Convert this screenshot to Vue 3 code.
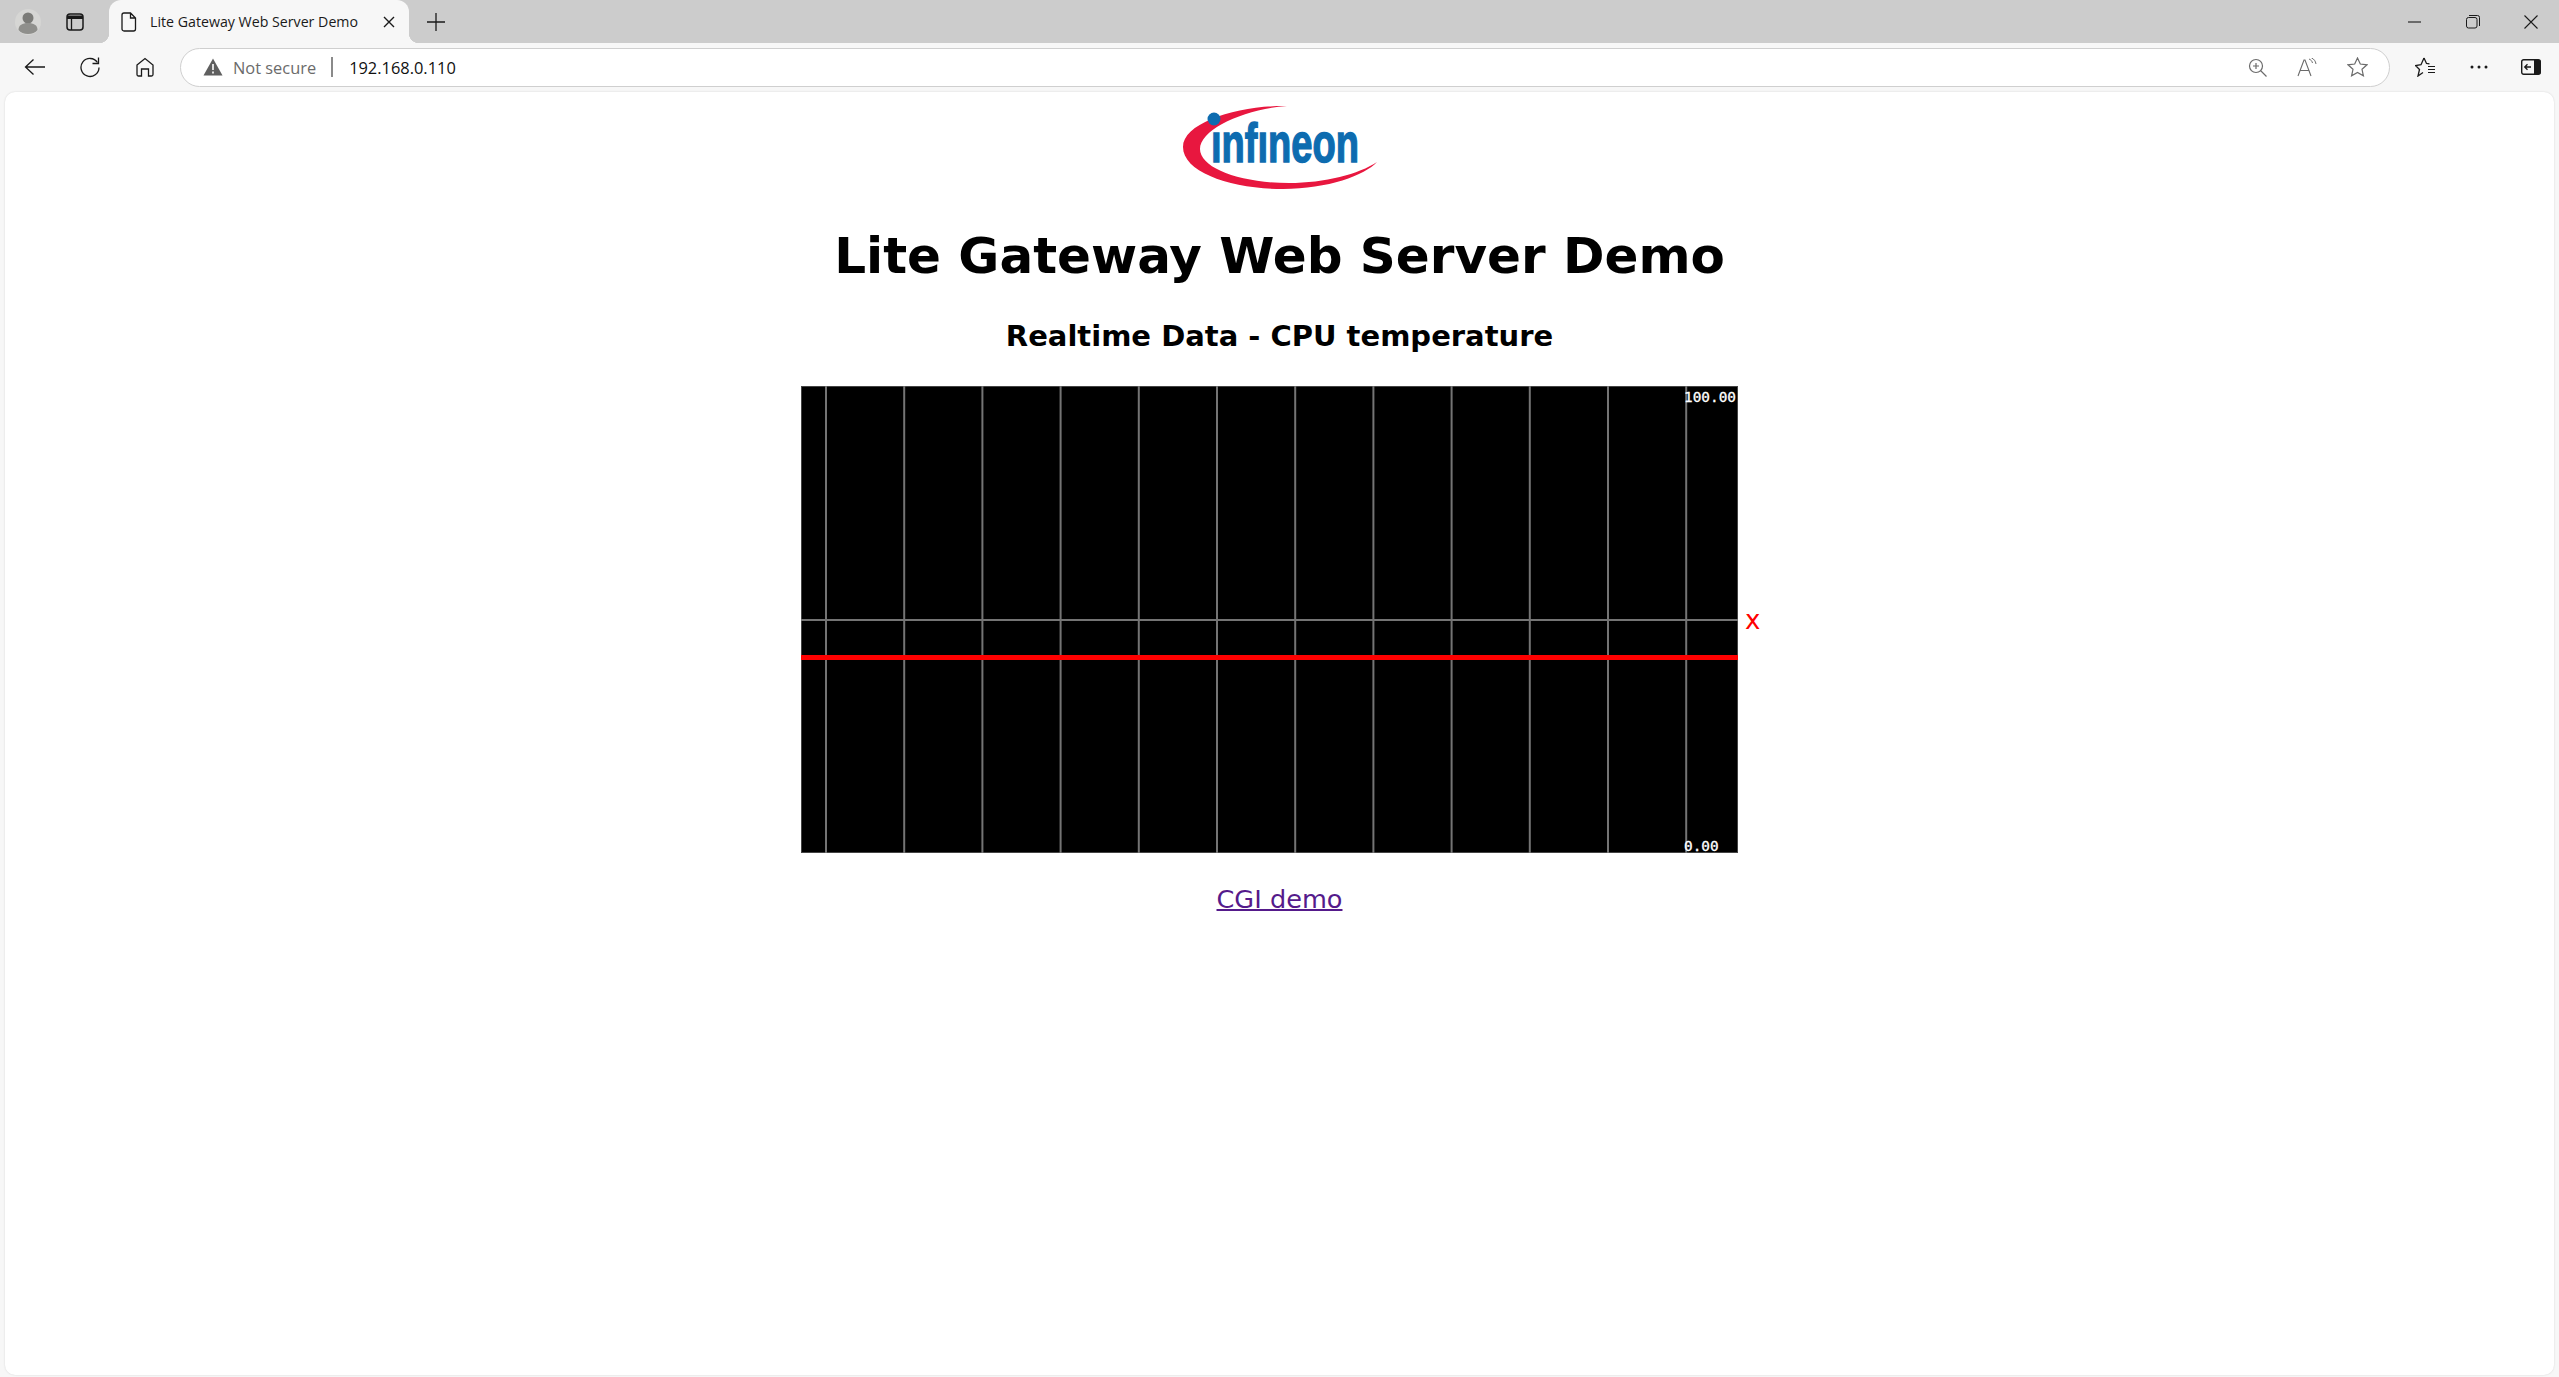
<script setup>
const chartW = 937
const chartH = 467
const gridX = Array.from({ length: 12 }, (_, i) => 25 + i * 78.2)
</script>

<template>
  <div class="browser">
    <div class="tabstrip">
      <div class="profile">
        <svg width="26" height="26" viewBox="0 0 26 26">
          <circle cx="13" cy="13" r="13" fill="#d6d6d4" />
          <circle cx="13" cy="9" r="5.500" fill="#7b7b78" />
          <path d="M3.500 21c0-5 4-7 9.500-7s9.500 2 9.500 7c-2 2.500-5.500 4-9.500 4s-7.500-1.500-9.500-4z" fill="#8f8f8c" />
        </svg>
      </div>
      <svg class="tabs-icon" width="18" height="18" viewBox="0 0 18 18">
        <rect x="1" y="1" width="16" height="16" rx="3" fill="none" stroke="#1a1a1a" stroke-width="1.500" />
        <path d="M1 2.500h16v3.500h-16z" fill="#1a1a1a" />
        <path d="M5.500 6v11" stroke="#1a1a1a" stroke-width="1.300" />
      </svg>
      <div class="tab">
        <svg width="16" height="20" viewBox="0 0 16 20">
          <path d="M3 1h6.500l5 5v11a2 2 0 0 1-2 2h-9.500a2 2 0 0 1-2-2v-14a2 2 0 0 1 2-2z M9.500 1v5h5" fill="none" stroke="#1a1a1a" stroke-width="1.300" />
        </svg>
        <span class="tab-title">Lite Gateway Web Server Demo</span>
        <svg class="tab-close" width="12" height="12" viewBox="0 0 12 12">
          <path d="M1 1l10 10M11 1l-10 10" stroke="#1a1a1a" stroke-width="1.400" />
        </svg>
      </div>
      <svg class="new-tab" width="18" height="18" viewBox="0 0 18 18">
        <path d="M9 0v18M0 9h18" stroke="#1a1a1a" stroke-width="1.300" />
      </svg>
      <div class="window-btns">
        <svg width="14" height="14" viewBox="0 0 14 14"><path d="M0 7h13" stroke="#1a1a1a" stroke-width="1.100" /></svg>
        <svg width="14" height="14" viewBox="0 0 14 14">
          <rect x="0.500" y="2.500" width="10.500" height="10.500" rx="2" fill="none" stroke="#1a1a1a" />
          <path d="M3 .5h8.500a2 2 0 0 1 2 2v8.500" fill="none" stroke="#1a1a1a" />
        </svg>
        <svg width="14" height="14" viewBox="0 0 14 14"><path d="M.5.5l13 13M13.500.5l-13 13" stroke="#1a1a1a" stroke-width="1.100" /></svg>
      </div>
    </div>

    <div class="toolbar">
      <svg class="nav" width="22" height="18" viewBox="0 0 22 18">
        <path d="M21 9h-19M9.500 1.500l-8 7.500 8 7.500" fill="none" stroke="#1a1a1a" stroke-width="1.300" />
      </svg>
      <svg class="nav" width="22" height="22" viewBox="0 0 22 22">
        <path d="M18.500 6.500a9 9 0 1 0 1.500 5" fill="none" stroke="#1a1a1a" stroke-width="1.300" />
        <path d="M19.500 1.500v6h-6" fill="none" stroke="#1a1a1a" stroke-width="1.300" />
      </svg>
      <svg class="nav" width="20" height="20" viewBox="0 0 20 20">
        <path d="M2 8l8-6.500 8 6.500v9.500a1.500 1.500 0 0 1-1.500 1.500h-3v-7h-7v7h-3a1.500 1.500 0 0 1-1.500-1.500z" fill="none" stroke="#1a1a1a" stroke-width="1.300" />
      </svg>
      <div class="address">
        <svg width="20" height="18" viewBox="0 0 20 18">
          <path d="M10 0.500l9.500 17h-19z" fill="#5f5f5f" />
          <path d="M10 6v6M10 13.500v2" stroke="#fff" stroke-width="1.600" />
        </svg>
        <span class="not-secure">Not secure</span>
        <span class="sep"></span>
        <span class="url">192.168.0.110</span>
        <span class="spacer"></span>
        <svg width="19" height="19" viewBox="0 0 19 19">
          <circle cx="8" cy="8" r="6.500" fill="none" stroke="#6b6b6b" stroke-width="1.200" />
          <path d="M12.500 12.500l6 6M8 5v6M5 8h6" stroke="#6b6b6b" stroke-width="1.200" />
        </svg>
        <svg width="20" height="19" viewBox="0 0 20 19">
          <path d="M1 18l6-16h1l6 16M3.500 12.500h9" fill="none" stroke="#6b6b6b" stroke-width="1.100" />
          <path d="M12 1c2 .8 3 2 3.500 4M14.500 0c2.500 1 4 3 4.500 6" fill="none" stroke="#6b6b6b" stroke-width="1" />
        </svg>
        <svg width="21" height="20" viewBox="0 0 21 20">
          <path d="M10.500 1l2.800 6 6.700.8-5 4.500 1.400 6.500-5.900-3.300-5.900 3.300 1.400-6.500-5-4.500 6.700-.8z" fill="none" stroke="#6b6b6b" stroke-width="1.200" />
        </svg>
      </div>
      <svg class="tool favs" width="21" height="20" viewBox="0 0 21 20">
        <path d="M9 1l2.500 5.500 3 .4M8 15.500l-5 3.500 1.500-6.500-4-4 5.500-.8 3-6.700M8 15.500" fill="none" stroke="#1a1a1a" stroke-width="1.300" />
        <path d="M13 9.500h7M13 12.500h7M13 15.500h7" stroke="#1a1a1a" stroke-width="1.200" />
      </svg>
      <svg class="tool more" width="18" height="4" viewBox="0 0 18 4">
        <circle cx="2" cy="2" r="1.500" fill="#1a1a1a" /><circle cx="9" cy="2" r="1.500" fill="#1a1a1a" /><circle cx="16" cy="2" r="1.500" fill="#1a1a1a" />
      </svg>
      <svg class="tool sidebar" width="20" height="16" viewBox="0 0 20 16">
        <rect x="0.700" y="0.700" width="18.600" height="14.600" rx="2" fill="none" stroke="#1a1a1a" stroke-width="1.400" />
        <path d="M13 1h5a1.500 1.500 0 0 1 1.500 1.500v11a1.500 1.500 0 0 1-1.500 1.500h-5z" fill="#1a1a1a" />
        <path d="M10 8h-6M6.500 5.200l-2.800 2.800 2.800 2.800" fill="none" stroke="#1a1a1a" stroke-width="1.300" />
      </svg>
    </div>

    <main class="page">
      <svg class="logo" width="200" height="90" viewBox="0 0 200 90">
        <path d="M107 4C60 3 3 20 3 45c0 26 50 42 100 42 45 0 82-14 94-27-18 12-52 21-88 21C60 81 20 66 20 47 20 27 65 7 107 4z" fill="#e8173f" />
        <text class="logo-text" x="31" y="60" textLength="148" lengthAdjust="spacingAndGlyphs">ınfıneon</text>
        <circle cx="34" cy="17" r="6.500" fill="#0d6cb0" />
      </svg>
      <h1>Lite Gateway Web Server Demo</h1>
      <h2>Realtime Data - CPU temperature</h2>
      <div class="chart-row">
        <svg class="chart" :width="chartW" :height="chartH" :viewBox="`0 0 ${chartW} ${chartH}`">
          <rect :width="chartW" :height="chartH" fill="#000" />
          <rect x="0.500" y="0.500" :width="chartW - 1" :height="chartH - 1" fill="none" stroke="#444" />
          <line v-for="x in gridX" :key="x" :x1="x" :x2="x" y1="0" :y2="chartH" stroke="#747474" stroke-width="2" />
          <line x1="0" :x2="chartW" y1="234" y2="234" stroke="#747474" stroke-width="2" />
          <line x1="0" :x2="chartW" y1="271.500" y2="271.500" stroke="#ff0000" stroke-width="5" />
          <text class="chart-label" x="883" y="16">100.00</text>
          <text class="chart-label" x="883" y="465">0.00</text>
        </svg>
        <span class="mark">x</span>
      </div>
      <a class="demo-link" href="#">CGI demo</a>
    </main>
  </div>
</template>

<style scoped>
.browser {
  width: 2559px;
  height: 1377px;
  display: flex;
  flex-direction: column;
  background: #f7f7f7;
  overflow: hidden;
}
.tabstrip {
  height: 43px;
  flex: none;
  display: flex;
  align-items: center;
  background: #cccccc;
}
.profile {
  display: flex;
  margin-left: 15px;
}
.tabs-icon {
  margin-left: 25px;
}
.tab {
  width: 300px;
  height: 43px;
  margin-left: 25px;
  box-sizing: border-box;
  padding-left: 12px;
  display: flex;
  align-items: center;
  background: #f7f7f7;
  border-radius: 12px 12px 0 0;
  position: relative;
}
.tab::before,
.tab::after {
  content: "";
  position: absolute;
  bottom: 0;
  width: 10px;
  height: 10px;
}
.tab::before {
  left: -10px;
  background: radial-gradient(circle at 0 0, #cccccc 10px, #f7f7f7 10.500px);
}
.tab::after {
  right: -10px;
  background: radial-gradient(circle at 100% 0, #cccccc 10px, #f7f7f7 10.500px);
}
.tab-title {
  margin-left: 13px;
  font: 14.200px "Open Sans", sans-serif;
  color: #1a1a1a;
  white-space: nowrap;
}
.tab-close {
  position: absolute;
  right: 14px;
  top: 16px;
}
.new-tab {
  margin-left: 18px;
}
.window-btns {
  margin-left: auto;
  margin-right: 21px;
  display: flex;
  gap: 44px;
}
.toolbar {
  height: 49px;
  flex: none;
  display: flex;
  align-items: center;
  padding-bottom: 1px;
  box-sizing: border-box;
}
.nav:nth-child(1) {
  margin-left: 24px;
}
.nav:nth-child(2) {
  margin-left: 33px;
}
.nav:nth-child(3) {
  margin-left: 34px;
}
.address {
  width: 2210px;
  height: 39px;
  margin-left: 25px;
  box-sizing: border-box;
  padding: 0 21px 0 22px;
  display: flex;
  align-items: center;
  background: #fff;
  border: 1px solid #cfcfcf;
  border-radius: 20px;
  font: 16.400px "Open Sans", sans-serif;
}
.not-secure {
  margin-left: 10px;
  color: #6b6b6b;
}
.sep {
  width: 2px;
  height: 20px;
  margin: 0 16px 0 15px;
  background: #8a8a8a;
}
.url {
  color: #111;
}
.spacer {
  flex: 1;
}
.address svg + svg {
  margin-left: 30px;
}
.favs {
  margin-left: 25px;
}
.more {
  margin-left: 34px;
}
.sidebar {
  margin-left: 33px;
}
.page {
  flex: 1;
  margin: 0 5px 2px;
  padding-top: 10px;
  background: #fff;
  border-radius: 10px;
  box-shadow: 0 0 2px rgba(0, 0, 0, 0.15);
  display: flex;
  flex-direction: column;
  align-items: center;
}
.logo {
  display: block;
}
.logo-text {
  font: 700 56px "Liberation Sans", sans-serif;
  fill: #0d6cb0;
  stroke: #0d6cb0;
  stroke-width: 1.500px;
}
h1 {
  margin: 29px 0 0;
  font: 700 50px/70px "DejaVu Sans", sans-serif;
  color: #000;
}
h2 {
  margin: 23px 0 0;
  font: 700 29px/44px "DejaVu Sans", sans-serif;
  color: #000;
}
.chart-row {
  margin-top: 28px;
  display: flex;
  align-items: center;
  color: #ff0000;
}
.chart {
  display: block;
}
.chart-label {
  font: 14.400px "DejaVu Sans Mono", monospace;
  fill: #fff;
  stroke: #fff;
  stroke-width: 0.300px;
}
.mark {
  width: 13px;
  padding-left: 7px;
  font: 26px "DejaVu Sans", sans-serif;
}
.demo-link {
  margin-top: 30px;
  font: 25.600px/32px "DejaVu Sans", sans-serif;
  color: #551a8b;
  text-decoration-thickness: 2px;
}
</style>

<style>
html, body {
  background: #fff;
}
</style>
